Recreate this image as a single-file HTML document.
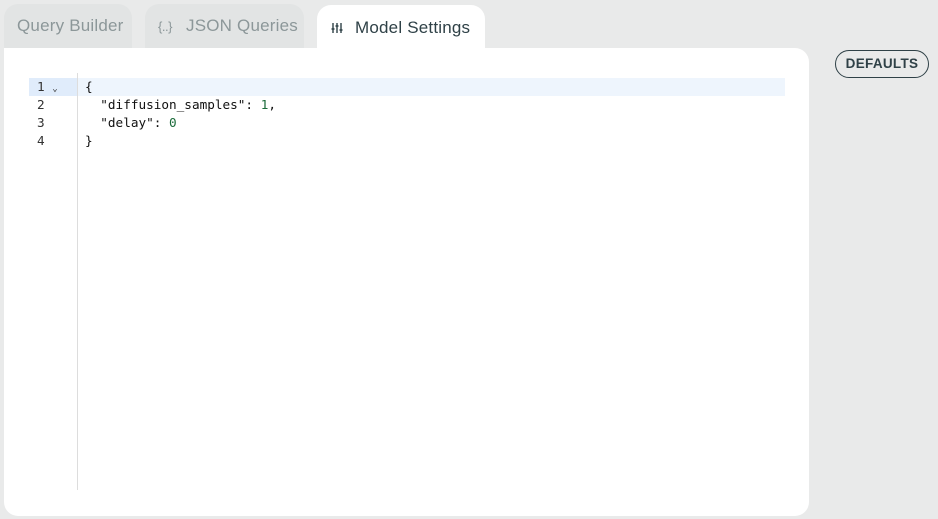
<!DOCTYPE html>
<html><head><style>
body{margin:0;width:938px;height:519px;background:#e9eaea;font-family:"Liberation Sans",sans-serif;position:relative;overflow:hidden}
.tab{position:absolute;top:4px;height:44px;border-radius:14px 14px 0 0;background:#e2e4e4;color:#8c9799;font-size:17px;letter-spacing:0.2px;line-height:44px;box-sizing:border-box;white-space:nowrap}
.panel{position:absolute;left:4px;top:48px;width:805px;height:468px;background:#fff;border-radius:0 14px 14px 14px}
.mono{font-family:"DejaVu Sans Mono","Liberation Mono",monospace;font-size:12.7px}
.ln{position:absolute;left:29px;width:48px;color:#333;}
.code{position:absolute;left:85px;color:#111;white-space:pre}
.btn{position:absolute;left:835px;top:50px;width:94px;height:28px;box-sizing:border-box;border:1.3px solid #2f4147;border-radius:15px;color:#2f4147;font-size:13.5px;font-weight:bold;text-align:center;line-height:26px;letter-spacing:0.3px}
</style></head><body>
<div class="tab" style="left:4px;width:128px;padding-left:13px">Query Builder</div>
<div class="tab" style="left:145px;width:159px;padding-left:13px"><span style="font-size:13px;letter-spacing:-0.5px;display:inline-block;width:28px">{..}</span>JSON Queries</div>
<div class="tab" style="left:317px;width:168px;top:5px;height:50px;background:#fff;color:#2f4147;padding-left:14px;line-height:46px">
<svg width="12" height="12" viewBox="0 0 12 12" style="vertical-align:-1px;margin-right:12px"><g stroke="#2f4147" stroke-width="1.4"><path d="M2 1V11M6 1V11M10 1V11"/><path d="M0.5 7H3.5M4.5 4H7.5M8.5 8H11.5"/></g></svg>Model Settings</div>
<div class="panel"></div>
<div style="position:absolute;left:29px;top:78px;width:756px;height:18px;background:#eef5fd"></div>
<div style="position:absolute;left:29px;top:78px;width:48px;height:18px;background:#e0ecfb"></div>
<div style="position:absolute;left:77px;top:73px;width:1px;height:417px;background:#ddd"></div>
<div class="mono">
<div class="ln" style="top:79px;left:37px">1 <span style="font-size:9px">⌄</span></div>
<div class="ln" style="top:97px;left:37px">2</div>
<div class="ln" style="top:115px;left:37px">3</div>
<div class="ln" style="top:133px;left:37px">4</div>
<div class="code" style="top:79px">{</div>
<div class="code" style="top:97px">  "diffusion_samples": <span style="color:#1b6b3a">1</span>,</div>
<div class="code" style="top:115px">  "delay": <span style="color:#1b6b3a">0</span></div>
<div class="code" style="top:133px">}</div>
</div>
<div class="btn">DEFAULTS</div>
</body></html>
